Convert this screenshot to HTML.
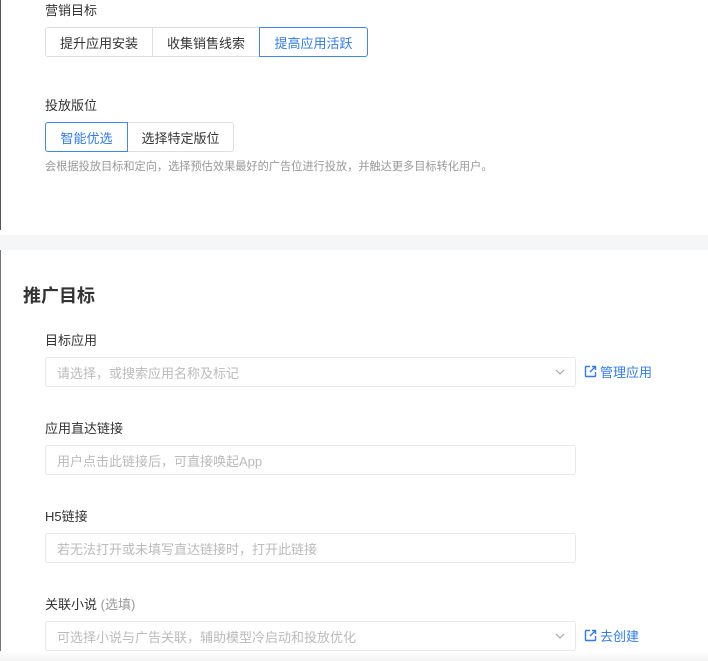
<!DOCTYPE html>
<html><head><meta charset="utf-8"><style>
*{margin:0;padding:0;box-sizing:border-box}
body{width:708px;height:661px;position:relative;background:#fff;font-family:"Liberation Sans","Noto Sans CJK SC",sans-serif;color:#333;overflow:hidden}
.a{position:absolute}
.lbl{font-size:13px;color:#333;left:45px}
.grp{display:flex;top:0}
.b{height:30px;border:1px solid #dcdfe6;font-size:13px;color:#333;display:flex;align-items:center;justify-content:center;margin-left:-1px;background:#fff}
.b.on{border-color:#3e86f5;color:#2f7bf0;position:relative;z-index:1}
.in{left:45px;width:531px;height:30px;border:1px solid #e6e8ec;border-radius:3px;font-size:13px;color:#bbb;padding-left:11px;display:flex;align-items:center}
.ch{position:absolute;right:10px;top:9px}
.lk{font-size:13px;color:#2f7bf0;display:flex;align-items:center;gap:3px}
</style></head><body>
<div class="a" style="left:0;top:0;width:1px;height:230px;background:#555"></div>
<div class="a" style="left:0;top:250px;width:1px;height:411px;background:#777"></div>
<div class="a lbl" style="top:0px">营销目标</div>
<div class="a grp" style="left:46px;top:27px">
<div class="b" style="width:108px;border-radius:3px 0 0 3px">提升应用安装</div>
<div class="b" style="width:108px">收集销售线索</div>
<div class="b on" style="width:109px;border-radius:0 3px 3px 0">提高应用活跃</div>
</div>
<div class="a lbl" style="top:95px">投放版位</div>
<div class="a grp" style="left:46px;top:122px">
<div class="b on" style="width:83px;border-radius:3px 0 0 3px">智能优选</div>
<div class="b" style="width:107px;border-radius:0 3px 3px 0">选择特定版位</div>
</div>
<div class="a" style="left:45px;top:158px;font-size:11.2px;color:#999">会根据投放目标和定向，选择预估效果最好的广告位进行投放，并触达更多目标转化用户。</div>
<div class="a" style="left:0;top:235px;width:708px;height:15px;background:#f4f6f8"></div>
<div class="a" style="left:23px;top:282px;font-size:18px;font-weight:bold;color:#333">推广目标</div>
<div class="a lbl" style="top:330px">目标应用</div>
<div class="a in" style="top:357px">请选择，或搜索应用名称及标记<svg class="ch" width="10" height="10" viewBox="0 0 10 10"><path d="M1 3l4 4 4-4" fill="none" stroke="#aaa" stroke-width="1.2"/></svg></div>
<div class="a lk" style="left:584px;top:362px"><svg width="13" height="13" viewBox="0 0 13 13"><path d="M6 1.5H2a.5.5 0 0 0-.5.5v9a.5.5 0 0 0 .5.5h9a.5.5 0 0 0 .5-.5V7M8 1.5h3.5V5M11.5 1.5L6 7" fill="none" stroke="#2f7bf0" stroke-width="1.4"/></svg>管理应用</div>
<div class="a lbl" style="top:418px">应用直达链接</div>
<div class="a in" style="top:445px">用户点击此链接后，可直接唤起App</div>
<div class="a lbl" style="top:506px">H5链接</div>
<div class="a in" style="top:533px">若无法打开或未填写直达链接时，打开此链接</div>
<div class="a lbl" style="top:594px">关联小说 <span style="color:#999">(选填)</span></div>
<div class="a in" style="top:621px">可选择小说与广告关联，辅助模型冷启动和投放优化<svg class="ch" width="10" height="10" viewBox="0 0 10 10"><path d="M1 3l4 4 4-4" fill="none" stroke="#aaa" stroke-width="1.2"/></svg></div>
<div class="a lk" style="left:584px;top:626px"><svg width="13" height="13" viewBox="0 0 13 13"><path d="M6 1.5H2a.5.5 0 0 0-.5.5v9a.5.5 0 0 0 .5.5h9a.5.5 0 0 0 .5-.5V7M8 1.5h3.5V5M11.5 1.5L6 7" fill="none" stroke="#2f7bf0" stroke-width="1.4"/></svg>去创建</div>
<div class="a" style="left:0;top:651px;width:708px;height:10px;background:linear-gradient(#fff,#f3f3f3)"></div>
</body></html>
